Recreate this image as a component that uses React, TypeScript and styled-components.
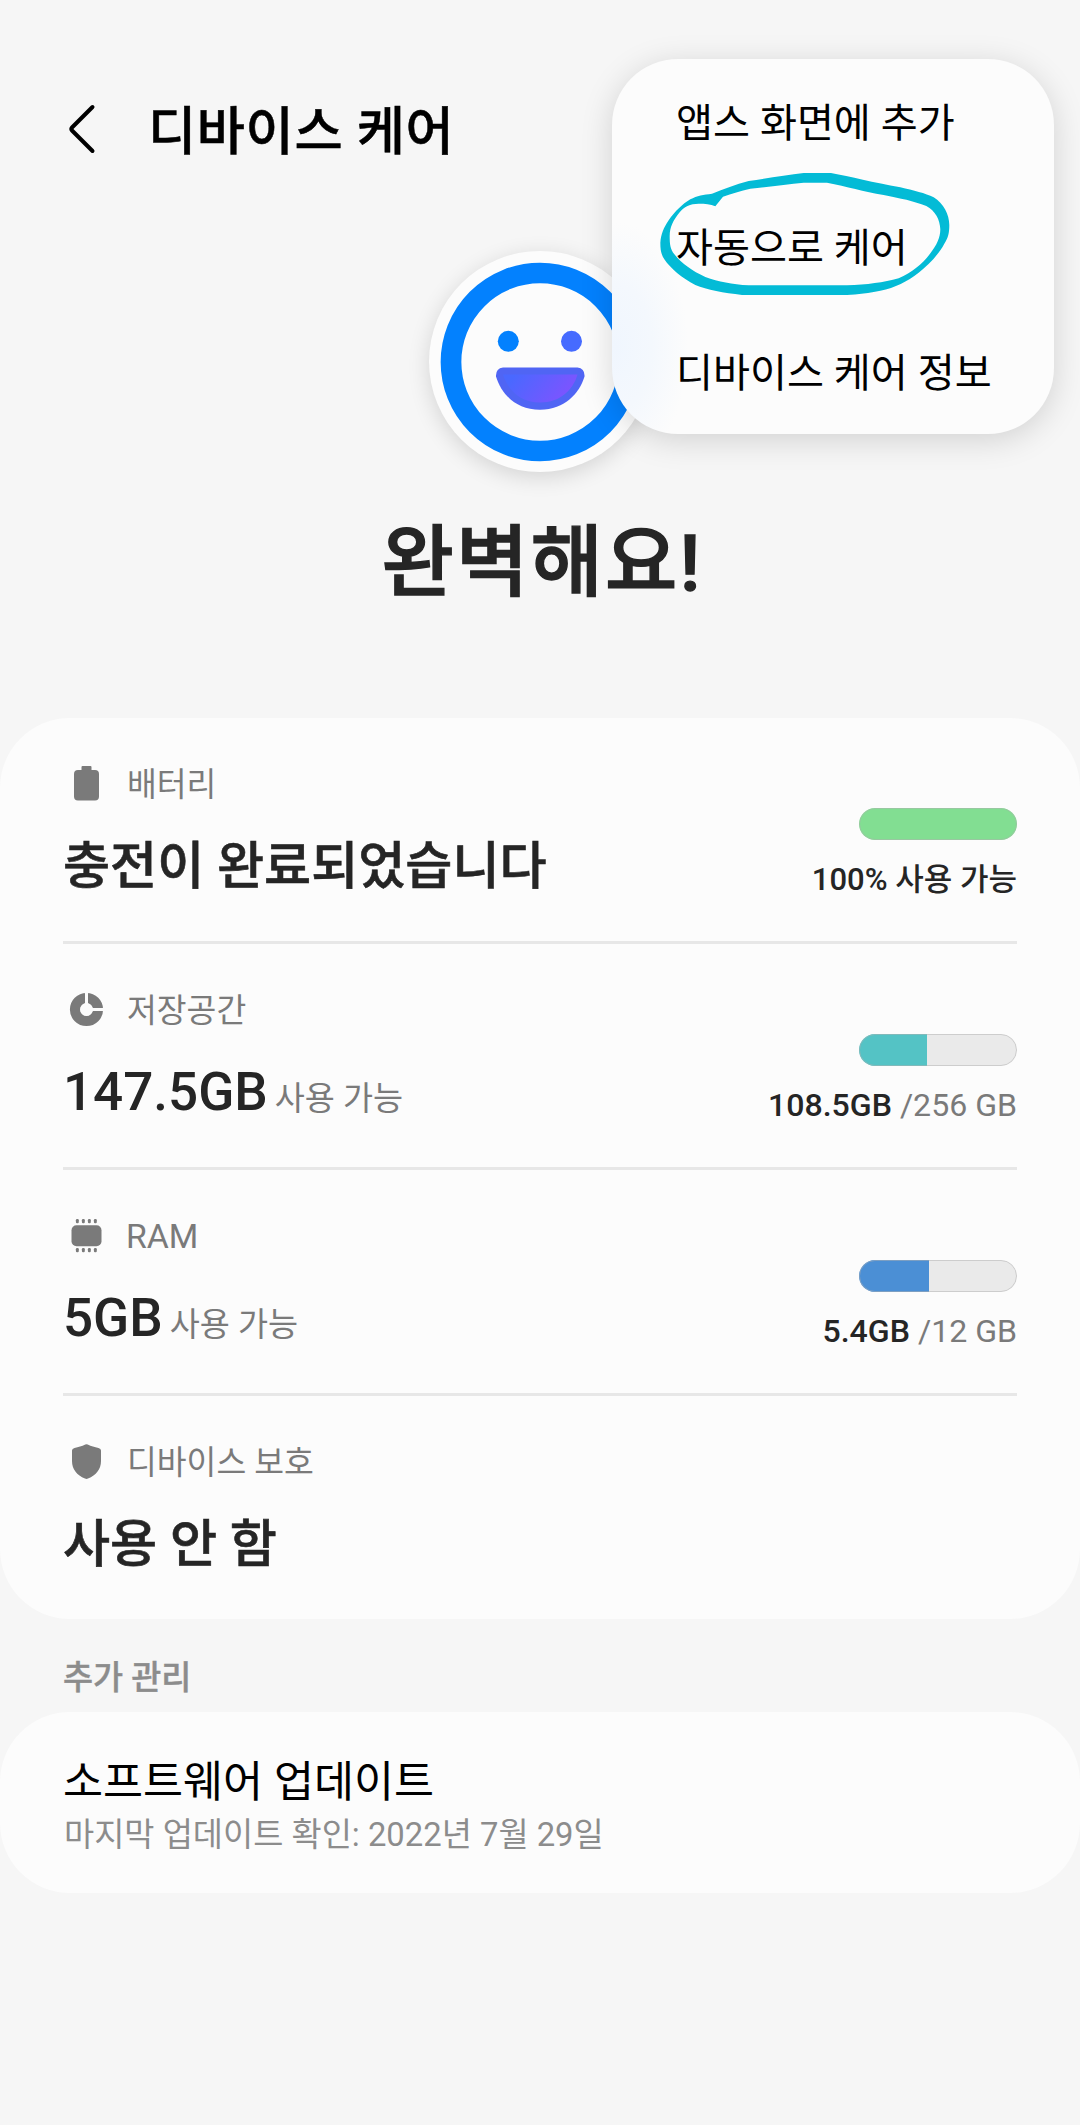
import React from "react";
import styled, { createGlobalStyle } from "styled-components";

const GlobalStyle = createGlobalStyle`
  * { box-sizing: border-box; }
  body {
    margin: 0;
    background: #f6f6f6;
    font-family: Roboto, "Noto Sans CJK KR", sans-serif;
    color: #252525;
  }
`;

const Page = styled.main`
  position: relative;
  width: 1080px;
  height: 2125px;
  overflow: hidden;
  display: flex;
  flex-direction: column;
  background: #f6f6f6;
`;

const Header = styled.header`
  height: 169px;
  padding: 88px 0 0 66px;
  display: flex;
  align-items: center;
  flex: none;
`;

const BackIcon = styled.svg`
  width: 32px;
  height: 52px;
  flex: none;
`;

const Title = styled.h1`
  margin: 0 0 0 50px;
  padding-top: 6px;
  font-size: 52.4px;
  line-height: 72px;
  font-weight: 500;
  letter-spacing: 0.6px;
  -webkit-text-stroke: 0.5px #000;
  color: #000;
`;

const Hero = styled.section`
  height: 549px;
  padding-top: 82px;
  display: flex;
  flex-direction: column;
  align-items: center;
  flex: none;
`;

const Face = styled.div`
  width: 222px;
  height: 221px;
  border-radius: 50%;
  background: #fcfcfc;
  box-shadow: 0 5px 22px rgba(0, 0, 0, 0.14);
  svg { display: block; }
`;

const Status = styled.p`
  margin: 36px 0 0;
  padding-left: 4px;
  font-size: 78.6px;
  line-height: 110px;
  font-weight: 500;
  letter-spacing: 2.2px;
  -webkit-text-stroke: 1.4px #252525;
`;

const Card = styled.section`
  flex: none;
  background: #fcfcfc;
  border-radius: 70px;
  padding: 0 63px;
`;

const Row = styled.div`
  height: 223px;
  display: flex;
  justify-content: space-between;
  & + & {
    height: 226px;
    border-top: 3px solid #e7e7e7;
  }
`;

const Info = styled.div`
  padding-top: 41px;
`;

const Label = styled.div<{ $latin?: boolean }>`
  display: flex;
  align-items: center;
  gap: ${(p) => (p.$latin ? 16 : 17)}px;
  height: 49px;
  font-size: ${(p) => (p.$latin ? 33.8 : 32.4)}px;
  line-height: 46px;
  color: #7a7a7a;
  svg { display: block; flex: none; }
  span { padding-top: 3px; }
`;

const Value = styled.div<{ $korean?: boolean }>`
  margin-top: ${(p) => (p.$korean ? 24 : 23)}px;
  font-size: ${(p) => (p.$korean ? 51.2 : 53)}px;
  line-height: 70px;
  font-weight: 500;
  -webkit-text-stroke: ${(p) => (p.$korean ? "0.6px #252525" : "0")};
  white-space: nowrap;
`;

const Unit = styled.span`
  margin-left: 7px;
  font-size: 32.7px;
  font-weight: 400;
  color: #7a7a7a;
`;

const Usage = styled.div`
  padding-top: 90px;
  display: flex;
  flex-direction: column;
  align-items: flex-end;
`;

const Bar = styled.div`
  position: relative;
  width: 158px;
  height: 32px;
  border-radius: 16px;
  overflow: hidden;
  background: #eaeaea;
  &::after {
    content: "";
    position: absolute;
    inset: 0;
    border-radius: 16px;
    border: 1px solid rgba(175, 175, 175, 0.5);
  }
`;

const Fill = styled.div<{ $color: string }>`
  height: 100%;
  background: ${(p) => p.$color};
`;

const Caption = styled.div<{ $korean?: boolean }>`
  margin-top: ${(p) => (p.$korean ? 18 : 17)}px;
  font-size: ${(p) => (p.$korean ? 31 : 32.1)}px;
  line-height: 44px;
  font-weight: 500;
  white-space: nowrap;
`;

const Total = styled.span`
  font-weight: 400;
  color: #7a7a7a;
`;

const SectionLabel = styled.h2`
  flex: none;
  height: 93px;
  margin: 0;
  padding: 36px 0 0 63px;
  font-size: 32.7px;
  line-height: 46px;
  font-weight: 500;
  -webkit-text-stroke: 0.4px #8c8c8c;
  color: #8c8c8c;
`;

const UpdateCard = styled(Card)`
  height: 181px;
  padding-top: 42px;
`;

const UpdateTitle = styled.div`
  font-size: 43.5px;
  line-height: 58px;
  color: #000;
`;

const UpdateNote = styled.div`
  padding-left: 1px;
  font-size: 32.8px;
  line-height: 46px;
  color: #8c8c8c;
`;

const Menu = styled.nav`
  position: absolute;
  left: 612px;
  top: 59px;
  width: 442px;
  height: 375px;
  border-radius: 66px;
  background:
    radial-gradient(ellipse 72px 125px at 4px 288px, #f0f6fe 0%, #f4f8fd 50%, rgba(252, 252, 252, 0) 100%),
    #fcfcfc;
  box-shadow: 0 6px 32px rgba(0, 0, 0, 0.15);
`;

const MenuItem = styled.div`
  height: 125px;
  padding: 5px 0 0 64px;
  font-size: 40.2px;
  line-height: 120px;
  color: #000;
  white-space: nowrap;
`;

const Scribble = styled.svg`
  position: absolute;
  left: 45px;
  top: 112px;
  width: 296.67px;
  height: 126.67px;
`;

const BatteryIcon = () => (
  <svg width="47" height="47" viewBox="0 0 47 47" fill="#7a7a7a">
    <path d="M19.500 6h8a1 1 0 0 1 1 1v3h3.500a4 4 0 0 1 4 4v22.500a4 4 0 0 1-4 4h-17a4 4 0 0 1-4-4V14a4 4 0 0 1 4-4h3.500V7a1 1 0 0 1 1-1z" />
  </svg>
);

const StorageIcon = () => (
  <svg width="47" height="47" viewBox="0 0 47 47">
    <circle cx="23.500" cy="23.500" r="11.500" fill="none" stroke="#7a7a7a" strokeWidth="10.200" />
    <path d="M23.500 5v18.500H42" fill="none" stroke="#fcfcfc" strokeWidth="3" />
    <circle cx="23.500" cy="23.500" r="6.300" fill="#fcfcfc" />
  </svg>
);

const RamIcon = () => (
  <svg width="47" height="47" viewBox="0 0 47 47" fill="#7a7a7a">
    <rect x="8.500" y="13.200" width="30" height="21" rx="5" />
    {[14.3, 20.3, 26.3, 32.3].map((x) => (
      <React.Fragment key={x}>
        <rect x={x - 1.4} y="7" width="2.900" height="4.300" rx="1.200" />
        <rect x={x - 1.4} y="36" width="2.900" height="4.300" rx="1.200" />
      </React.Fragment>
    ))}
  </svg>
);

const ShieldIcon = () => (
  <svg width="47" height="47" viewBox="0 0 47 47" fill="#7a7a7a">
    <path d="M22.300 6.600q1.200-.5 2.400 0c3.600 1.700 6.800 2.600 10.800 3.300q2.500.5 2.500 2.700V23c0 8-4.800 14.200-13 17.600q-1.500.6-3 0C13.800 37.200 9 31 9 23V12.600q0-2.200 2.500-2.700c4-.7 7.200-1.600 10.800-3.300z" />
  </svg>
);

interface UsageData {
  percent: number;
  color: string;
  used: string;
  total?: string;
}

interface RowData {
  icon: React.ReactNode;
  label: string;
  latin?: boolean;
  value: string;
  unit?: string;
  usage?: UsageData;
}

const rows: RowData[] = [
  {
    icon: <BatteryIcon />,
    label: "배터리",
    value: "충전이 완료되었습니다",
    usage: { percent: 100, color: "#82de92", used: "100% 사용 가능" },
  },
  {
    icon: <StorageIcon />,
    label: "저장공간",
    value: "147.5GB",
    unit: "사용 가능",
    usage: { percent: 43, color: "#54c3c5", used: "108.5GB", total: "/256 GB" },
  },
  {
    icon: <RamIcon />,
    label: "RAM",
    latin: true,
    value: "5GB",
    unit: "사용 가능",
    usage: { percent: 44, color: "#4b8fd5", used: "5.4GB", total: "/12 GB" },
  },
  { icon: <ShieldIcon />, label: "디바이스 보호", value: "사용 안 함" },
];

const menuItems = ["앱스 화면에 추가", "자동으로 케어", "디바이스 케어 정보"];

export default function App() {
  return (
    <>
      <GlobalStyle />
      <Page>
        <Header>
          <BackIcon viewBox="0 0 32 52">
            <path d="M26.500 4 6 24.500q-1.500 1.500 0 3L26.500 48" fill="none" stroke="#000" strokeWidth="4" strokeLinecap="round" />
          </BackIcon>
          <Title>디바이스 케어</Title>
        </Header>

        <Hero>
          <Face>
            <svg width="222" height="221" viewBox="0 0 222 221">
              <defs>
                <linearGradient id="mouth" x1="0" y1="0" x2="1" y2="0.300">
                  <stop offset="0.150" stopColor="#4a68ff" />
                  <stop offset="1" stopColor="#7d54ff" />
                </linearGradient>
              </defs>
              <circle cx="111" cy="111" r="89" fill="none" stroke="#0381fe" strokeWidth="20.700" />
              <circle cx="79.300" cy="90.300" r="10.500" fill="#0381fe" />
              <circle cx="142.500" cy="90.300" r="10.500" fill="#466bff" />
              <path d="M74 116.500h74.500q7.500 1 7 9C150.500 142 136 158.700 111 158.700S72 142 67 125.500q-.5-8 7-9z" fill="#5065f4" />
              <path d="M74 123.500h74.500C144 139 131 151.500 111 151.500S79 139 74 123.500z" fill="url(#mouth)" />
            </svg>
          </Face>
          <Status>완벽해요!</Status>
        </Hero>

        <Card>
          {rows.map((row) => (
            <Row key={row.label}>
              <Info>
                <Label $latin={row.latin}>
                  {row.icon}
                  <span>{row.label}</span>
                </Label>
                <Value $korean={!row.unit}>
                  {row.value}
                  {row.unit && <Unit>{row.unit}</Unit>}
                </Value>
              </Info>
              {row.usage && (
                <Usage>
                  <Bar>
                    <Fill $color={row.usage.color} style={{ width: `${row.usage.percent}%` }} />
                  </Bar>
                  <Caption $korean={!row.usage.total}>
                    {row.usage.used}
                    {row.usage.total && <Total> {row.usage.total}</Total>}
                  </Caption>
                </Usage>
              )}
            </Row>
          ))}
        </Card>

        <SectionLabel>추가 관리</SectionLabel>

        <UpdateCard>
          <UpdateTitle>소프트웨어 업데이트</UpdateTitle>
          <UpdateNote>마지막 업데이트 확인: 2022년 7월 29일</UpdateNote>
        </UpdateCard>

        <Menu>
          {menuItems.map((item) => (
            <MenuItem key={item}>{item}</MenuItem>
          ))}
          <Scribble viewBox="200 390 890 380">
            <path
              fill="#03bbd6"
              fillRule="evenodd"
              d="M398 467L375 496C360 489 345 488 325 488C300 488 280 498 268 514C248 538 238 560 238 585C238 610 240 625 252 640C275 668 305 690 345 708C385 722 425 730 475 733H770C830 731 880 725 925 712C965 695 995 670 1018 640C1040 612 1050 590 1050 565C1049 535 1035 510 1008 495C970 480 930 472 880 462C820 452 770 436 710 425H640C590 429 540 438 480 443C450 449 425 458 398 467Z
              M365 458C400 445 435 430 475 420C530 412 590 402 640 396H722C780 406 850 425 930 439C970 448 1005 457 1030 469C1060 488 1077 520 1077 552C1077 575 1074 590 1062 608C1045 640 1015 672 985 695C950 722 915 740 870 749C840 756 800 760 770 762H455C400 755 350 747 315 732C275 712 240 682 222 655C212 640 210 625 210 605C212 580 220 560 235 538C255 510 275 490 300 475C320 464 340 461 365 458Z"
            />
          </Scribble>
        </Menu>
      </Page>
    </>
  );
}
